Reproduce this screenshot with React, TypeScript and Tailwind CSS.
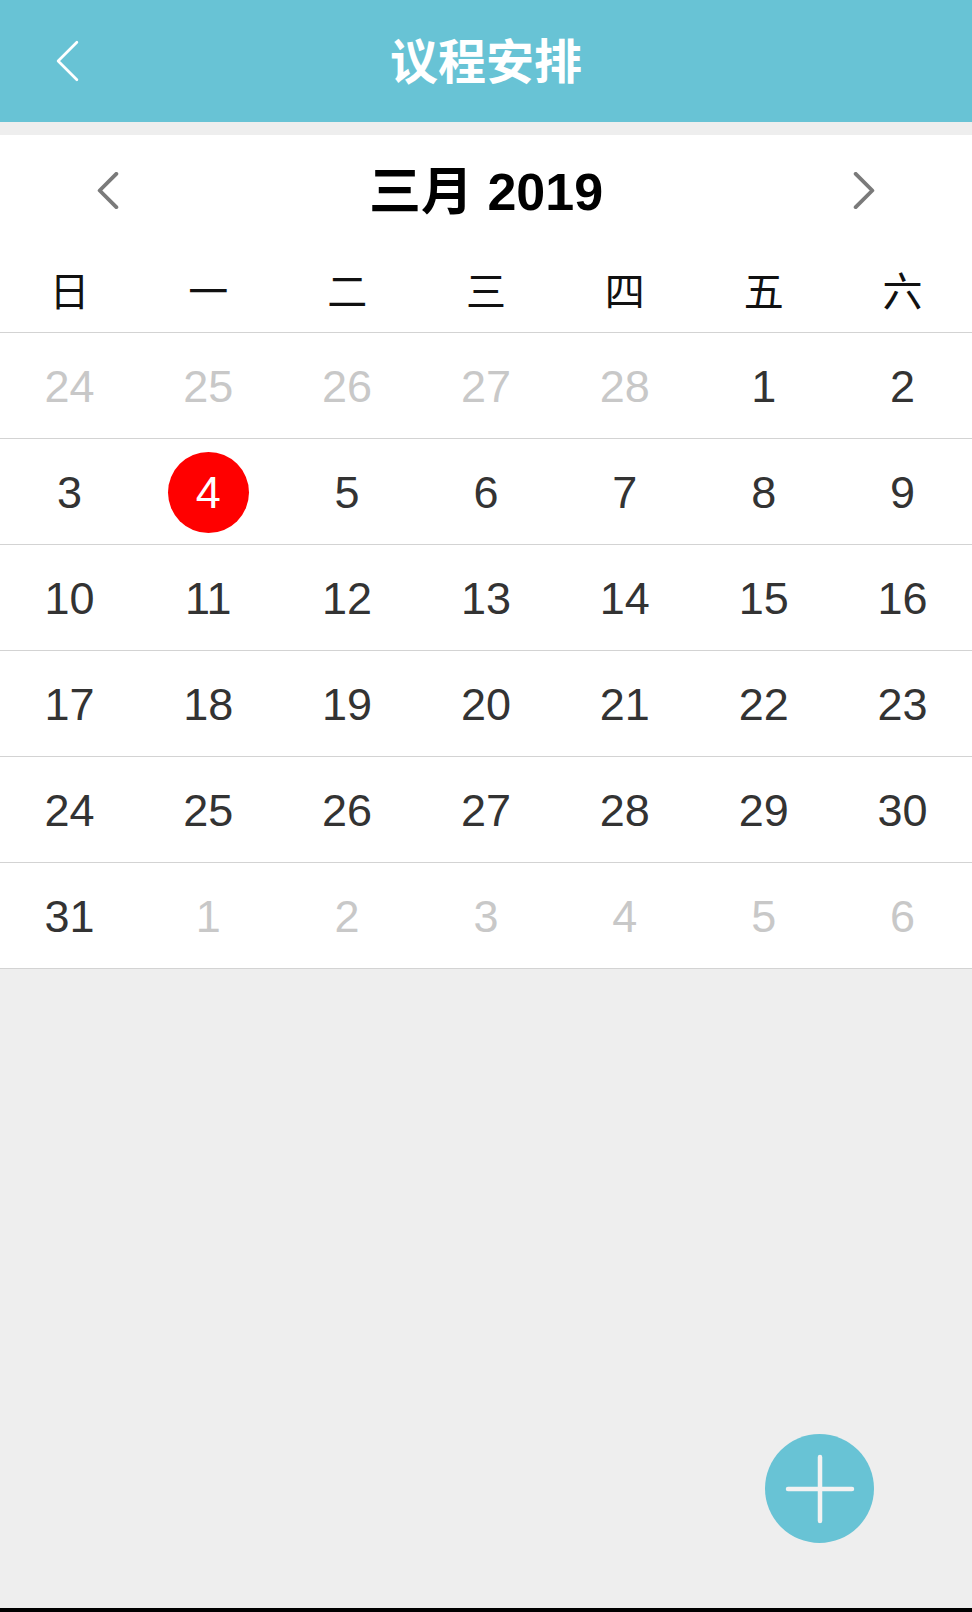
import React from 'react'

// 议程安排 — 月历视图
type Day = { n: number; muted?: boolean; today?: boolean }

const WEEKDAYS = ['日', '一', '二', '三', '四', '五', '六']

const buildWeeks = (): Day[][] => {
  const days: Day[] = []
  for (let d = 24; d <= 28; d++) days.push({ n: d, muted: true })
  for (let d = 1; d <= 31; d++) days.push({ n: d, today: d === 4 })
  for (let d = 1; d <= 6; d++) days.push({ n: d, muted: true })
  const weeks: Day[][] = []
  for (let i = 0; i < days.length; i += 7) weeks.push(days.slice(i, i + 7))
  return weeks
}

const Chevron = ({ dir, className }: { dir: 'left' | 'right'; className: string }) => (
  <svg viewBox="0 0 24 40" className={className} fill="none" stroke="currentColor" strokeLinecap="round" strokeLinejoin="round">
    {dir === 'left' ? <path d="M21 2 L3 20 L21 38" /> : <path d="M3 2 L21 20 L3 38" />}
  </svg>
)

export default function App() {
  const weeks = buildWeeks()

  return (
    <div className="relative flex min-h-[1612px] w-[972px] flex-col bg-[#eeeeee] font-['Liberation_Sans','Noto_Sans_CJK_SC',sans-serif]">
      {/* 顶部标题栏 */}
      <header className="relative flex h-[122px] items-center justify-center bg-[#68c3d5]">
        <button className="absolute left-[55px] top-[40px] text-white">
          <Chevron dir="left" className="h-[42px] w-[25px] stroke-[2.6]" />
        </button>
        <h1 className="font-['Noto_Sans_CJK_SC',sans-serif] text-[48px] font-bold leading-none text-white -mt-[6px]">
          议程安排
        </h1>
      </header>

      <div className="h-[13px]" />

      {/* 日历 */}
      <section className="bg-white">
        <div className="flex h-[110px] items-center justify-between px-[96px]">
          <Chevron dir="left" className="h-[37px] w-[24px] stroke-[4.2] text-[#7a7a7a]" />
          <div className="text-[52px] font-bold leading-none text-black">
            <span className="font-['Noto_Sans_CJK_SC',sans-serif]">三月</span> 2019
          </div>
          <Chevron dir="right" className="h-[37px] w-[24px] stroke-[4.2] text-[#7a7a7a]" />
        </div>

        <div className="grid h-[88px] grid-cols-7 items-center border-b border-[#d3d3d3]">
          {WEEKDAYS.map((w) => (
            <div key={w} className="text-center font-['Noto_Sans_CJK_SC',sans-serif] text-[40px] leading-none text-[#111111]">
              {w}
            </div>
          ))}
        </div>

        {weeks.map((week, i) => (
          <div key={i} className="grid h-[106px] grid-cols-7 items-center border-b border-[#d3d3d3]">
            {week.map((d, j) => (
              <div key={j} className="flex items-center justify-center pt-[2px]">
                {d.today ? (
                  <span className="flex h-[81px] w-[81px] items-center justify-center rounded-full bg-[#ff0000] text-[45px] leading-none text-white">
                    {d.n}
                  </span>
                ) : (
                  <span className={`text-[45px] leading-none ${d.muted ? 'text-[#c8c8c8]' : 'text-[#333333]'}`}>
                    {d.n}
                  </span>
                )}
              </div>
            ))}
          </div>
        ))}
      </section>

      <div className="flex-1" />
      <div className="h-[4px] bg-black" />

      {/* 新建议程 */}
      <button className="absolute bottom-[69px] right-[98px] flex h-[109px] w-[109px] items-center justify-center rounded-full bg-[#68c3d5]">
        <svg viewBox="0 0 70 70" className="h-[70px] w-[70px]" stroke="#f2f2f2" strokeWidth="4.5" strokeLinecap="round">
          <path d="M35 3 V67 M3 35 H67" />
        </svg>
      </button>
    </div>
  )
}
